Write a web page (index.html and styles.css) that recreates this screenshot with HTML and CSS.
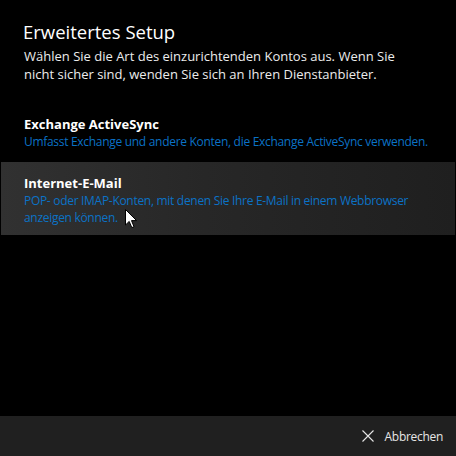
FILE: index.html
```html
<!DOCTYPE html>
<html lang="de">
<head>
<meta charset="utf-8">
<link rel="stylesheet" href="styles.css">
</head>
<body>
<div class="dialog">
  <div class="content">
    <h1 class="title">Erweitertes Setup</h1>
    <p class="intro">Wählen Sie die Art des einzurichtenden Kontos aus. Wenn Sie nicht sicher sind, wenden Sie sich an Ihren Dienstanbieter.</p>
    <div class="options">
      <div class="option">
        <div class="option-name">Exchange ActiveSync</div>
        <div class="option-desc">Umfasst Exchange und andere Konten, die Exchange ActiveSync verwenden.</div>
      </div>
      <div class="option hover">
        <div class="option-name">Internet-E-Mail</div>
        <div class="option-desc">POP- oder IMAP-Konten, mit denen Sie Ihre E-Mail in einem Webbrowser anzeigen können.</div>
        <svg class="cursor" width="13" height="20" viewBox="0 0 13 20"><path d="M0.5 0.5 L0.5 16 L4.2 12.4 L6.8 18.6 L9 17.7 L6.5 11.6 L11.6 11.6 Z" fill="#fff" stroke="#000" stroke-width="1"/></svg>
      </div>
    </div>
  </div>
  <div class="footer">
    <button class="cancel">
      <svg width="12" height="12" viewBox="0 0 12 12"><path d="M0.5 0.5 L11.5 11.5 M11.5 0.5 L0.5 11.5" stroke="#e6e6e6" stroke-width="1.1" fill="none"/></svg>
      <span>Abbrechen</span>
    </button>
  </div>
</div>
</body>
</html>
```
FILE: styles.css
```css
html, body {
  margin: 0;
  padding: 0;
  background: #000;
}
body {
  font-family: "Open Sans", "Noto Sans", sans-serif;
  color: #fff;
}
.dialog {
  width: 456px;
  height: 456px;
  display: flex;
  flex-direction: column;
}
.content {
  flex: 1;
  padding-top: 19px;
}
.title {
  margin: 0 23px;
  font-size: 18.5px;
  font-weight: 400;
  line-height: 26px;
  color: #fff;
}
.intro {
  width: 385px;
  margin: 2px 0 0 24px;
  font-size: 13px;
  line-height: 18px;
  color: #ececec;
}
.options {
  margin-top: 21px;
  display: flex;
  flex-direction: column;
}
.option {
  position: relative;
  margin: 0 1px;
  padding: 11px 23px 12px 23px;
}
.option.hover {
  background: linear-gradient(90deg, #313131 0%, #272727 45%, #1f1f1f 100%);
  padding-top: 12px;
  padding-bottom: 9px;
}
.option-name {
  font-size: 13px;
  font-weight: 700;
  line-height: 18px;
  color: #fff;
}
.option-desc {
  font-size: 12px;
  letter-spacing: -0.3px;
  line-height: 17px;
  color: #0b72c6;
}
.cursor {
  position: absolute;
  left: 124px;
  top: 47px;
}
.footer {
  height: 40px;
  background: #202020;
  display: flex;
  justify-content: flex-end;
  align-items: center;
  padding-right: 13px;
}
.cancel {
  display: flex;
  align-items: center;
  gap: 11px;
  background: none;
  border: 0;
  padding: 0;
  font-family: "Open Sans", "Noto Sans", sans-serif;
  font-size: 12px;
  letter-spacing: -0.3px;
  color: #e6e6e6;
}
```
